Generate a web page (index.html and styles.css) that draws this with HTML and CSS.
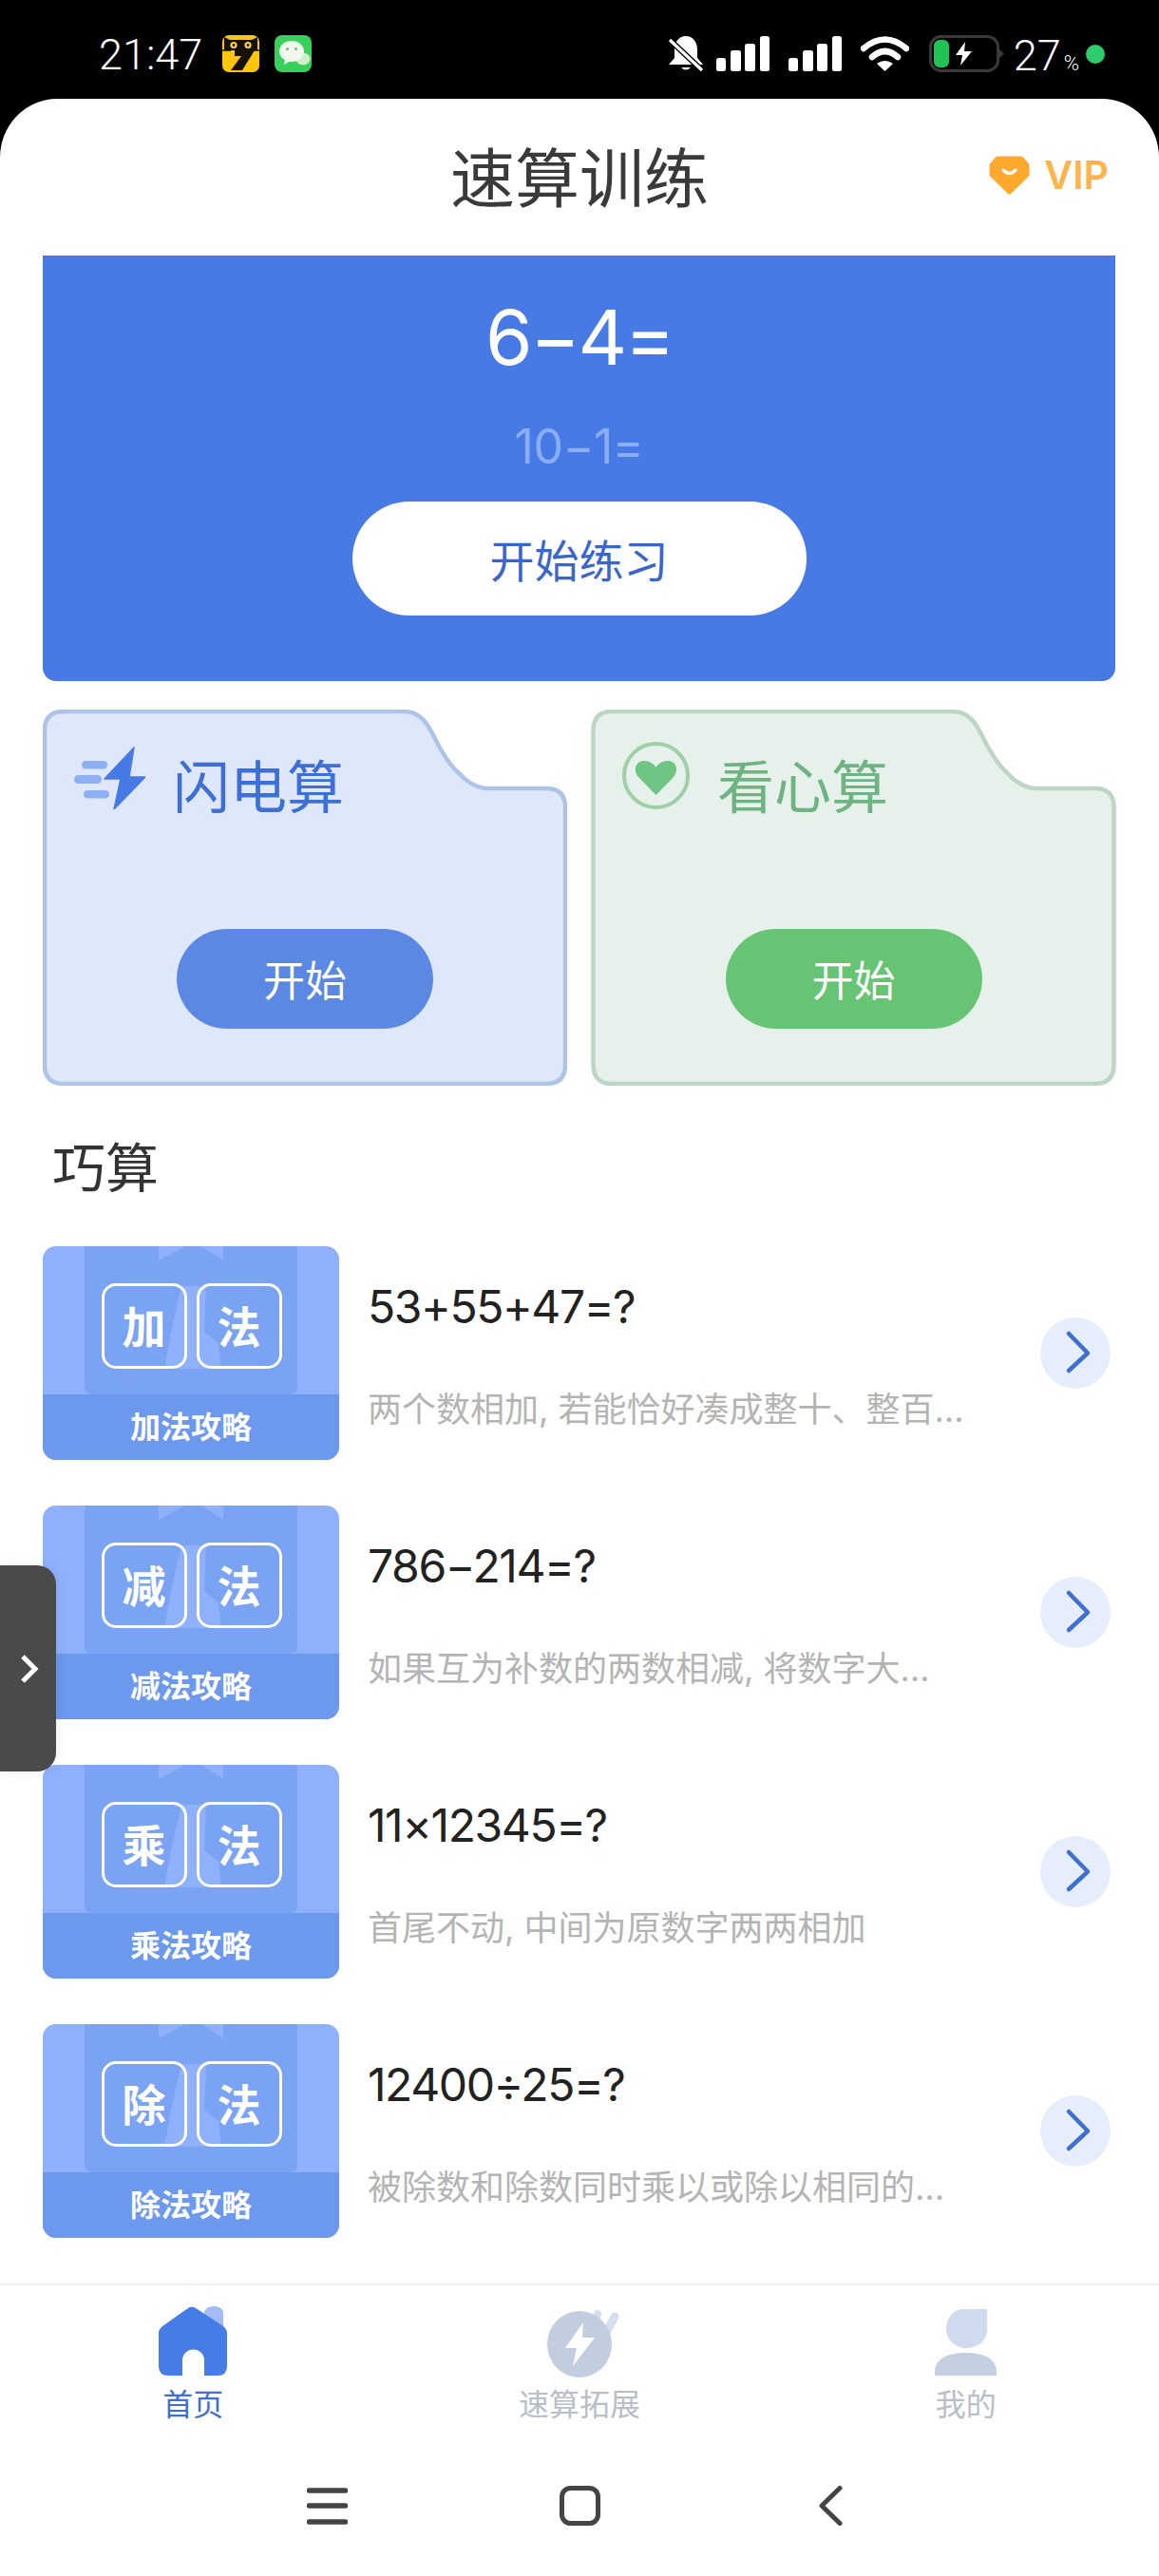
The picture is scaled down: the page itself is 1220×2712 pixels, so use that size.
FILE: index.html
```html
<!DOCTYPE html>
<html lang="zh-CN">
<head>
<meta charset="utf-8">
<title>速算训练</title>
<link rel="stylesheet" href="styles.css">
</head>
<body>
<svg class="defs" xmlns="http://www.w3.org/2000/svg">
  <symbol id="thumb-bg" viewBox="0 0 312 225">
    <rect width="312" height="225" fill="#8fb1fb"/>
    <path d="M44 0H268V148Q268 156 260 156H52Q44 156 44 148Z" fill="#7aa3f4"/>
    <path d="M122 0V15L150 0ZM167 0L190 15V0Z" fill="#8fb1fb"/>
    <path d="M146 42H172L170 90L185 102L188 129H128L135 90Z" fill="#8fb1fb"/>
  </symbol>
  <symbol id="chev" viewBox="0 0 74 75">
    <path d="M30 17L50 37.5L30 56" fill="none" stroke="#3f6fd0" stroke-width="4.5" stroke-linecap="round" stroke-linejoin="round"/>
  </symbol>
</svg>

<div class="phone">
  <div class="status">
    <div class="status-left">
      <span class="time">21:47</span>
      <svg class="app-icon cat" viewBox="0 0 39 39">
        <rect width="39" height="39" rx="7" fill="#fdc60d"/>
        <path d="M2 2L8 5H31L37 2V16H2Z" fill="#16120a"/>
        <circle cx="12" cy="10.5" r="3.6" fill="#fdd24a"/>
        <circle cx="27" cy="10.5" r="3.6" fill="#fdd24a"/>
        <circle cx="12" cy="10.5" r="1.4" fill="#16120a"/>
        <circle cx="27" cy="10.5" r="1.4" fill="#16120a"/>
        <path d="M13 16H34L21 37H9L20 22H13Z" fill="#16120a"/>
        <path d="M0 16H9M30 16H39" stroke="#16120a" stroke-width="1.4"/>
      </svg>
      <svg class="app-icon" viewBox="0 0 39 39">
        <rect width="39" height="39" rx="8" fill="#37d05a"/>
        <ellipse cx="30" cy="25" rx="7.5" ry="6.5" fill="#cdeec9"/>
        <ellipse cx="18" cy="17" rx="13" ry="11" fill="#eef8ec"/>
        <path d="M11 25L10 31L17 27Z" fill="#eef8ec"/>
        <circle cx="13.5" cy="14.5" r="1.5" fill="#7fae88"/>
        <circle cx="22.5" cy="14.5" r="1.5" fill="#7fae88"/>
      </svg>
    </div>
    <div class="status-right">
      <svg class="bell" viewBox="0 0 38 38">
        <path d="M19 0C26 0 31 6 31 14V23L37 30H1L7 23V14C7 6 12 0 19 0Z" fill="#fff"/>
        <path d="M14 33H24Q19 38 14 33Z" fill="#fff"/>
        <path d="M1 3L37 37" stroke="#000" stroke-width="6"/>
        <path d="M2 4L36 36" stroke="#fff" stroke-width="3.2"/>
      </svg>
      <svg class="signal" viewBox="0 0 56 37">
        <rect x="0" y="23" width="10" height="14" rx="2.5" fill="#fff"/>
        <rect x="15" y="15" width="11" height="22" rx="2.5" fill="#fff"/>
        <rect x="30" y="8" width="11" height="29" rx="2.5" fill="#fff"/>
        <rect x="46" y="0" width="10" height="37" rx="2.5" fill="#fff"/>
      </svg>
      <svg class="signal" viewBox="0 0 56 37">
        <rect x="0" y="23" width="10" height="14" rx="2.5" fill="#fff"/>
        <rect x="15" y="15" width="11" height="22" rx="2.5" fill="#fff"/>
        <rect x="30" y="8" width="11" height="29" rx="2.5" fill="#fff"/>
        <rect x="46" y="0" width="10" height="37" rx="2.5" fill="#fff"/>
      </svg>
      <svg class="wifi" viewBox="0 0 51 37">
        <path d="M3 13Q25.5 -6 48 13" fill="none" stroke="#fff" stroke-width="6.5" stroke-linecap="round"/>
        <path d="M12 22Q25.5 10 39 22" fill="none" stroke="#fff" stroke-width="6.5" stroke-linecap="round"/>
        <path d="M17 29Q25.5 23 34 29L25.5 37Z" fill="#fff"/>
      </svg>
      <svg class="battery" viewBox="0 0 79 39">
        <rect x="1.5" y="1.5" width="71" height="36" rx="11" fill="none" stroke="#3a3a3a" stroke-width="3"/>
        <rect x="5" y="5" width="16" height="29" rx="6" fill="#1fc454"/>
        <path d="M38 7L28 21H35L33 32L45 17H37Z" fill="#fff"/>
        <path d="M74 15L79 19.5L74 24Z" fill="#3a3a3a"/>
      </svg>
      <span class="batt-num">27<span class="batt-pct">%</span></span>
      <span class="dot"></span>
    </div>
  </div>

  <div class="sheet">
    <header class="topbar">
      <span></span>
      <h1 class="page-title">速算训练</h1>
      <div class="vip">
        <svg class="vip-gem" viewBox="0 0 43 41">
          <path d="M9 3H34L40 10V20L21.5 38L3 20V10Z" fill="#ffa92e" stroke="#ffa92e" stroke-width="5" stroke-linejoin="round"/>
          <path d="M15 15Q21.5 22 28 15" fill="none" stroke="#fff" stroke-width="3.4" stroke-linecap="round"/>
        </svg>
        <span class="vip-text">VIP</span>
      </div>
    </header>

    <section class="hero">
      <div class="eq-main">6−4=</div>
      <div class="eq-next">10−1=</div>
      <div class="hero-btn">开始练习</div>
    </section>

    <section class="cards">
      <div class="card card-blue">
        <svg class="card-shape" viewBox="0 0 552 396">
          <path d="M22 2H380C398 2 406 16 414 33C422 48 430 60 437 66C446 76 456 83 469 83H530Q550 83 550 103V374Q550 394 530 394H22Q2 394 2 374V22Q2 2 22 2Z"/>
        </svg>
        <div class="card-head">
          <svg class="card-icon-bolt" viewBox="0 0 75 71">
            <rect x="8" y="20" width="27" height="8.5" rx="4.2" fill="#8db0f5"/>
            <rect x="0" y="35" width="29" height="9" rx="4.5" fill="#8db0f5"/>
            <rect x="10" y="51" width="27" height="8.5" rx="4.2" fill="#8db0f5"/>
            <path d="M63 6L32 39H49L42 71L75 37H58Z" fill="#487ae5" stroke="#487ae5" stroke-width="1.5" stroke-linejoin="round"/>
          </svg>
          <h2 class="card-title">闪电算</h2>
        </div>
        <div class="card-btn">开始</div>
      </div>
      <div class="card card-green">
        <svg class="card-shape" viewBox="0 0 552 396">
          <path d="M22 2H380C398 2 406 16 414 33C422 48 430 60 437 66C446 76 456 83 469 83H530Q550 83 550 103V374Q550 394 530 394H22Q2 394 2 374V22Q2 2 22 2Z"/>
        </svg>
        <div class="card-head">
          <svg class="card-icon-heart" viewBox="0 0 71 71">
            <circle cx="35.5" cy="35.5" r="33.5" fill="none" stroke="#9ecfa8" stroke-width="4"/>
            <path d="M35.5 56L17 37C11 30 14 20 23 20C29 20 33 23 35.5 27C38 23 42 20 48 20C57 20 60 30 54 37Z" fill="#6fc584"/>
          </svg>
          <h2 class="card-title">看心算</h2>
        </div>
        <div class="card-btn">开始</div>
      </div>
    </section>

    <h2 class="section-title">巧算</h2>

    <section class="tips">
      <article class="tip">
        <div class="thumb">
          <svg class="thumb-bg"><use href="#thumb-bg"/></svg>
          <div class="thumb-boxes"><span class="thumb-box">加</span><span class="thumb-box">法</span></div>
          <div class="thumb-label">加法攻略</div>
        </div>
        <div class="tip-text">
          <div class="tip-title">53+55+47=?</div>
          <div class="tip-desc">两个数相加, 若能恰好凑成整十、整百…</div>
        </div>
        <svg class="tip-go"><use href="#chev"/></svg>
      </article>
      <article class="tip">
        <div class="thumb">
          <svg class="thumb-bg"><use href="#thumb-bg"/></svg>
          <div class="thumb-boxes"><span class="thumb-box">减</span><span class="thumb-box">法</span></div>
          <div class="thumb-label">减法攻略</div>
        </div>
        <div class="tip-text">
          <div class="tip-title">786−214=?</div>
          <div class="tip-desc">如果互为补数的两数相减, 将数字大…</div>
        </div>
        <svg class="tip-go"><use href="#chev"/></svg>
      </article>
      <article class="tip">
        <div class="thumb">
          <svg class="thumb-bg"><use href="#thumb-bg"/></svg>
          <div class="thumb-boxes"><span class="thumb-box">乘</span><span class="thumb-box">法</span></div>
          <div class="thumb-label">乘法攻略</div>
        </div>
        <div class="tip-text">
          <div class="tip-title">11×12345=?</div>
          <div class="tip-desc">首尾不动, 中间为原数字两两相加</div>
        </div>
        <svg class="tip-go"><use href="#chev"/></svg>
      </article>
      <article class="tip">
        <div class="thumb">
          <svg class="thumb-bg"><use href="#thumb-bg"/></svg>
          <div class="thumb-boxes"><span class="thumb-box">除</span><span class="thumb-box">法</span></div>
          <div class="thumb-label">除法攻略</div>
        </div>
        <div class="tip-text">
          <div class="tip-title">12400÷25=?</div>
          <div class="tip-desc">被除数和除数同时乘以或除以相同的…</div>
        </div>
        <svg class="tip-go"><use href="#chev"/></svg>
      </article>
    </section>

    <nav class="tabbar">
      <div class="tab tab-active">
        <svg class="tab-icon" viewBox="0 0 72 76">
          <path d="M48 8Q48 0 58 0Q68 0 68 8V26L48 14Z" fill="#a3bcf8"/>
          <path d="M31 2Q35 -0.5 39 2L68 21Q72 24 72 29V63Q72 73 62 73H48V57A11.5 11.5 0 0 0 25 57V73H10Q0 73 0 63V29Q0 24 4 21Z" fill="#467ce6"/>
        </svg>
        <span class="tab-label">首页</span>
      </div>
      <div class="tab">
        <svg class="tab-icon" viewBox="-7 0 82 76">
          <path d="M53 8L50 16" stroke="#d6def0" stroke-width="8" stroke-linecap="round"/>
          <path d="M71 11L63 26" stroke="#d6def0" stroke-width="9" stroke-linecap="round"/>
          <ellipse cx="34" cy="40" rx="34" ry="35" fill="#c3cde0"/>
          <path d="M38 17L19 44H31L27 63L50 33H37Z" fill="#fff"/>
        </svg>
        <span class="tab-label">速算拓展</span>
      </div>
      <div class="tab">
        <svg class="tab-icon" viewBox="0 0 66 76">
          <path d="M30 3H55V25C55 36 45 44 33.5 44C22 44 12 36 12 24C12 12 20 3 30 3Z" fill="#d0dbf0"/>
          <path d="M0 73V69C0 55 14 49 32.5 49C51 49 65 55 65 69V73Z" fill="#c6cfe2"/>
        </svg>
        <span class="tab-label">我的</span>
      </div>
    </nav>

    <div class="sysnav">
      <div class="sysnav-item">
        <svg class="sysnav-icon" viewBox="0 0 43 42">
          <path d="M2.5 5H40.5M2.5 21H40.5M2.5 38H40.5" stroke="#444" stroke-width="5.5" stroke-linecap="round"/>
        </svg>
      </div>
      <div class="sysnav-item">
        <svg class="sysnav-icon" viewBox="0 0 43 42">
          <rect x="2.5" y="2.5" width="38" height="37" rx="9" fill="none" stroke="#444" stroke-width="5"/>
        </svg>
      </div>
      <div class="sysnav-item">
        <svg class="sysnav-icon" viewBox="0 0 43 42">
          <path d="M29 2.5L10 21L29 39.5" fill="none" stroke="#444" stroke-width="5" stroke-linecap="round" stroke-linejoin="round"/>
        </svg>
      </div>
    </div>
  </div>

  <div class="side-handle">
    <svg class="side-chev" viewBox="0 0 20 32"><path d="M3 3L16 16L3 29" fill="none" stroke="#fff" stroke-width="5"/></svg>
  </div>
</div>
</body>
</html>
```
FILE: styles.css
```css
* { box-sizing: border-box; }
html, body { margin: 0; padding: 0; }
body {
  background: #000;
  font-family: "Noto Sans CJK SC", "Noto Sans", sans-serif;
}
h1, h2 { margin: 0; font-weight: 400; }
.defs { display: none; }

.phone {
  position: relative;
  width: 1220px;
  height: 2712px;
  overflow: hidden;
  background: #000;
}

/* status bar */
.status {
  height: 104px;
  padding: 37px 57px 0 104px;
  display: flex;
  justify-content: space-between;
  align-items: flex-start;
  color: #fff;
  font-family: Roboto, sans-serif;
}
.status-left { display: flex; align-items: center; height: 39px; }
.time { font-size: 45px; line-height: 41px; width: 130px; height: 39px; font-weight: 300; }
.app-icon { width: 39px; height: 39px; margin-right: 16px; }
.status-right { display: flex; align-items: center; height: 39px; }
.bell { width: 38px; height: 38px; margin-right: 13px; }
.signal { width: 56px; height: 37px; margin-right: 20px; }
.wifi { width: 51px; height: 37px; margin-right: 21px; }
.battery { width: 79px; height: 39px; margin-right: 10px; }
.batt-num { font-size: 45px; line-height: 43px; height: 39px; font-weight: 300; }
.batt-pct { font-size: 22px; margin-left: 3px; }
.dot { width: 20px; height: 20px; border-radius: 50%; background: #2ecc6b; margin-left: 7px; }

/* sheet */
.sheet {
  height: 2608px;
  background: #fff;
  border-radius: 60px 60px 0 0 / 62px 62px 0 0;
  display: flex;
  flex-direction: column;
}
.topbar {
  height: 165px;
  display: grid;
  grid-template-columns: 1fr auto 1fr;
  align-items: center;
  padding-bottom: 5px;
}
.page-title {
  font-size: 68px;
  line-height: 80px;
  color: #3a3a3a;
}
.vip {
  justify-self: end;
  margin-right: 53px;
  display: flex;
  align-items: center;
  gap: 15px;
}
.vip-gem { width: 43px; height: 41px; }
.vip-text {
  font-family: Inter, sans-serif;
  font-size: 41px;
  line-height: 41px;
  font-weight: 600;
  color: #ffb34d;
}

/* hero */
.hero {
  margin: 0 46px 0 45px;
  height: 448px;
  background: #487ae5;
  border-radius: 0 0 14px 14px;
  display: flex;
  flex-direction: column;
  align-items: center;
  font-family: Inter, sans-serif;
}
.eq-main {
  margin-top: 36px;
  font-size: 80px;
  line-height: 100px;
  letter-spacing: -2.5px;
  color: #fff;
}
.eq-next {
  margin-top: 35px;
  font-size: 50px;
  line-height: 60px;
  letter-spacing: -0.5px;
  font-weight: 400;
  color: #8aaef6;
}
.hero-btn {
  margin-top: 28px;
  width: 478px;
  height: 120px;
  border-radius: 60px;
  background: #fff;
  color: #3a66cc;
  font-family: "Noto Sans CJK SC", sans-serif;
  font-size: 47px;
  line-height: 120px;
  text-align: center;
}

/* cards */
.cards {
  margin: 30px 45px 0;
  display: grid;
  grid-template-columns: 552px 553px;
  gap: 25px;
}
.card {
  position: relative;
  height: 396px;
  display: flex;
  flex-direction: column;
  padding: 34px 33px 60px;
}
.card-shape {
  position: absolute;
  inset: 0;
  width: 100%;
  height: 100%;
  stroke-width: 4.5;
}
.card-blue .card-shape { fill: #dfe7fb; stroke: #aec3ea; }
.card-green .card-shape { fill: #e5f1ea; stroke: #bcd5c5; }
.card-head {
  position: relative;
  display: flex;
  align-items: flex-start;
  gap: 29px;
}
.card-icon-bolt { width: 75px; height: 71px; }
.card-icon-heart { width: 71px; height: 71px; }
.card-title {
  font-size: 60px;
  line-height: 70px;
  margin-top: 9px;
}
.card-blue .card-title { color: #3d6fd6; }
.card-green .card-title { color: #6fb382; }
.card-btn {
  position: relative;
  margin: auto auto 0;
  width: 270px;
  height: 105px;
  border-radius: 53px;
  color: #fff;
  font-size: 44px;
  line-height: 105px;
  text-align: center;
}
.card-blue .card-btn { background: #5b88e3; }
.card-green .card-btn { background: #67c474; }

/* tips list */
.section-title {
  margin: 55px 0 0 55px;
  font-size: 56px;
  line-height: 56px;
  color: #333;
}
.tips {
  margin: 58px 45px 0;
  display: flex;
  flex-direction: column;
  gap: 48px;
}
.tip {
  height: 225px;
  display: flex;
  align-items: center;
}
.thumb {
  position: relative;
  flex: none;
  width: 312px;
  height: 225px;
  border-radius: 14px;
  overflow: hidden;
  display: flex;
  flex-direction: column;
}
.thumb-bg {
  position: absolute;
  inset: 0;
  width: 100%;
  height: 100%;
}
.thumb-boxes {
  position: relative;
  margin: 39px 0 0 1px;
  display: flex;
  justify-content: center;
  gap: 10px;
}
.thumb-box {
  width: 90px;
  height: 90px;
  border: 3px solid #fff;
  border-radius: 15px;
  color: #fff;
  font-size: 46px;
  font-weight: 700;
  line-height: 80px;
  text-align: center;
}
.thumb-label {
  position: relative;
  margin-top: auto;
  height: 69px;
  background: #6c98ee;
  color: #fff;
  font-size: 32px;
  font-weight: 700;
  line-height: 64px;
  text-align: center;
}
.tip-text {
  flex: 1;
  align-self: flex-start;
  margin-left: 30px;
  padding-top: 34px;
}
.tip-title {
  font-family: Inter, sans-serif;
  font-size: 48px;
  line-height: 60px;
  letter-spacing: -1.4px;
  color: #222;
}
.tip-desc {
  margin-top: 56px;
  font-family: Inter, "Noto Sans CJK SC", sans-serif;
  font-size: 36px;
  line-height: 44px;
  color: #b4b4b4;
}
.tip-go {
  flex: none;
  width: 74px;
  height: 75px;
  margin-right: 6px;
  border-radius: 50%;
  background: #e6eefc;
}

/* tab bar */
.tabbar {
  margin-top: 48px;
  height: 161px;
  border-top: 2px solid #f0f0f0;
  display: grid;
  grid-template-columns: repeat(3, 1fr);
}
.tab {
  display: flex;
  flex-direction: column;
  align-items: center;
  padding-top: 22px;
}
.tab-icon { height: 76px; }
.tab-label {
  margin-top: 5px;
  font-size: 32px;
  line-height: 40px;
  color: #b9bec8;
}
.tab-active .tab-label { color: #3f6fd0; }

/* system nav */
.sysnav {
  display: flex;
  justify-content: center;
  padding-top: 52px;
}
.sysnav-item {
  width: 266px;
  display: flex;
  justify-content: center;
}
.sysnav-icon { width: 43px; height: 42px; }

/* floating handle */
.side-handle {
  position: absolute;
  left: 0;
  top: 1648px;
  width: 59px;
  height: 217px;
  background: #4a4a4a;
  border-radius: 0 20px 20px 0;
  box-shadow: 0 0 14px rgba(0, 0, 0, 0.08);
  display: flex;
  align-items: center;
}
.side-chev { width: 20px; height: 32px; margin-left: 21px; }
```
